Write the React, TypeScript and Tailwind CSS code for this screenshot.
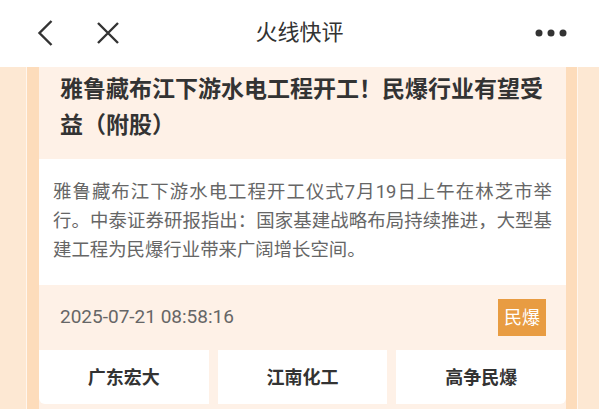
import React from "react";

const stocks = ["广东宏大", "江南化工", "高争民爆"];

function Header() {
  return (
    <div className="flex h-[67px] items-center bg-white pb-[2px]">
      <div className="flex w-[130px] items-center pl-[36px]">
        <svg width="18" height="28" viewBox="0 0 18 28" fill="none">
          <path d="M15.5 2 L3.5 14 L15.5 26" stroke="#333" strokeWidth="2.4" strokeLinejoin="miter" />
        </svg>
        <svg className="ml-[41px]" width="26" height="26" viewBox="0 0 26 26" fill="none">
          <path d="M3 3 L23 23 M23 3 L3 23" stroke="#333" strokeWidth="2.4" />
        </svg>
      </div>
      <div className="flex-1 text-center text-[22px] text-[#333] font-['Roboto','Noto_Sans_CJK_SC',sans-serif]">
        火线快评
      </div>
      <div className="flex w-[130px] justify-end pr-[32px]">
        <svg width="32" height="8" viewBox="0 0 32 8">
          <circle cx="4" cy="4" r="3.5" fill="#333" />
          <circle cx="16" cy="4" r="3.5" fill="#333" />
          <circle cx="28" cy="4" r="3.5" fill="#333" />
        </svg>
      </div>
    </div>
  );
}

function Card() {
  return (
    <div className="flex flex-1 flex-col bg-[#fef1e7] pb-[5px]">
      {/* 标题 */}
      <div className="h-[92px] pl-[21px] pr-[21px] pt-[5px] text-[23px] font-bold leading-[36px] text-[#333]">
        雅鲁藏布江下游水电工程开工！民爆行业有望受益（附股）
      </div>

      {/* 内容 */}
      <div className="h-[126px] bg-white px-[14px] pt-[18px] text-justify text-[18.4px] leading-[29px] text-[#666]">
        雅鲁藏布江下游水电工程开工仪式7月19日上午在林芝市举行。中泰证券研报指出：国家基建战略布局持续推进，大型基建工程为民爆行业带来广阔增长空间。
      </div>

      {/* 时间 + 标签 */}
      <div className="flex h-[65px] items-center justify-between pl-[21px] pr-[20px]">
        <span className="text-[19px] text-[#666]">2025-07-21 08:58:16</span>
        <span className="flex h-[37px] items-center bg-[#e89c42] px-[6px] text-[18px] text-white">
          民爆
        </span>
      </div>

      {/* 相关股票 */}
      <div className="grid h-[54px] grid-cols-3 gap-[9px]">
        {stocks.map((s, i) => (
          <div
            key={s}
            className={
              "flex items-center justify-center bg-white text-[18px] font-bold text-[#333] " +
              (i === 0 ? "rounded-bl-[6px]" : i === 2 ? "rounded-br-[6px]" : "")
            }
          >
            {s}
          </div>
        ))}
      </div>
    </div>
  );
}

export default function App() {
  return (
    <div className="flex h-[409px] w-[599px] flex-col overflow-hidden bg-white font-['Roboto','Noto_Sans_CJK_SC',sans-serif]">
      <Header />
      <div className="flex flex-1 bg-[#fde8d3]">
        <div className="w-[26px]" />
        <div className="w-px bg-[#fff6ee]" />
        <div className="w-[12px] bg-[#fddcbb]" />
        <Card />
        <div className="w-[11px] bg-[#fddcbb]" />
        <div className="w-px bg-[#fff6ee]" />
        <div className="w-[21px]" />
      </div>
    </div>
  );
}
